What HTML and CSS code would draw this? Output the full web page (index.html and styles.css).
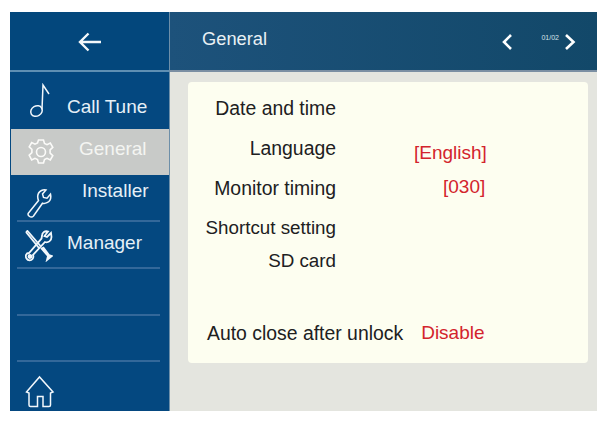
FILE: index.html
```html
<!DOCTYPE html>
<html lang="en">
<head>
    <meta charset="UTF-8">
    <title>General</title>
    <link rel="stylesheet" href="styles.css">
</head>
<body>
    <div class="screen">
        <div class="sidebar">
            <div class="back">
                <svg width="26" height="22" viewBox="0 0 26 22" fill="none" stroke="#f4f8fa" stroke-width="2.400"><path d="M24 12H3M11.500 3.500L3 12l8.500 8.500"/></svg>
            </div>
            <div class="menu-item tune">
                <svg width="26" height="38" viewBox="0 0 26 38" fill="none" stroke="#f2f7fb" stroke-width="1.500"><ellipse cx="7.500" cy="28" rx="6" ry="5" transform="rotate(-30 7.500 28)"/><path d="M13 26.500L14 2l6 9"/></svg>
                <span>Call Tune</span>
            </div>
            <div class="menu-item active">
                <svg width="26" height="28" viewBox="0 0 26 28" fill="none" stroke="#fbfbf9" stroke-width="1.600"><circle cx="13" cy="14" r="4.500"/><path d="M10.500 2h5l1 3.500 2.500 1.200 3.300-1.700 2.500 4.300-2.700 2.500v3.400l2.700 2.500-2.500 4.300-3.300-1.700-2.500 1.200-1 3.500h-5l-1-3.500-2.500-1.200-3.300 1.700L1.200 17.200l2.700-2.500v-3.400L1.200 8.800 3.700 4.500 7 6.200l2.500-1.200z"/></svg>
                <span>General</span>
            </div>
            <div class="menu-item installer">
                <svg width="26" height="30" viewBox="0 0 26 30" fill="none" stroke="#f2f7fb" stroke-width="1.500"><path d="M1.500 25l10-12.500c-1.500-4 -.5-8 3-10 1.500-.8 3-1 4.500-.6l-3.500 4 1 3.500 3.500.8 3.500-4c.8 3.500-.5 7-3.500 8.500-1.500.8-3 .9-4.500.5L6.500 28c-1.500 1.500-3.500 1-4.500 0s-1.500-1.800-.5-3z"/></svg>
                <span>Installer</span>
            </div>
            <div class="menu-item manager">
                <svg width="28" height="32" viewBox="0 0 28 32" fill="none" stroke="#f2f7fb" stroke-width="1.800"><path d="M1 2l1.500-1 13 15"/><path d="M1 2l13 16"/><path d="M16 18l7 8-1 4 5-4-3-1-6-8" fill="#f2f7fb"/><path d="M26 3l-4 4-2.500-1L23 1.500c-3-1-6 1-6 4.500l-.5 2.500L4 23c-3 0-4 3-2.500 5.500S6 31 7.500 29s1-3 .5-4l12-13c3 1 6.500-1 6.500-5z"/><circle cx="5" cy="26.500" r="1.500" fill="#f2f7fb"/></svg>
                <span>Manager</span>
            </div>
            <div class="menu-item empty thick"></div>
            <div class="menu-item empty"></div>
            <div class="home">
                <svg width="30" height="33" viewBox="0 0 30 33" fill="none" stroke="#f2f7fb" stroke-width="1.500"><path d="M1.500 17L14.500 2 28 17l-2.500 1v12c0 1-.5 1.500-1.500 1.500h-6V21.500h-5.500v10H5.500c-1 0-1.500-.5-1.500-1.500V18z"/></svg>
            </div>
        </div>
        <div class="main">
            <div class="header">
                <span class="title">General</span>
                <svg class="prev" width="12" height="18" viewBox="0 0 12 18" fill="none" stroke="#fff" stroke-width="2.600"><path d="M10 2L3 9l7 7"/></svg>
                <span class="page">01/02</span>
                <svg class="next" width="12" height="18" viewBox="0 0 12 18" fill="none" stroke="#fff" stroke-width="2.600"><path d="M2 2l7.500 7L2 16"/></svg>
            </div>
            <div class="content">
                <div class="panel">
                    <div class="row"><span class="label">Date and time</span></div>
                    <div class="row"><span class="label">Language</span><span class="value lang">[English]</span></div>
                    <div class="row"><span class="label">Monitor timing</span><span class="value timing">[030]</span></div>
                    <div class="row shortcut"><span class="label">Shortcut setting</span></div>
                    <div class="row short"><span class="label">SD card</span></div>
                    <div class="row auto"><span>Auto close after unlock</span><span class="value disable">Disable</span></div>
                </div>
            </div>
        </div>
    </div>
</body>
</html>
```

FILE: styles.css
```css
body {
    margin: 0;
    padding: 12px 0 0 10px;
    background-color: #fff;
    font-family: "Liberation Sans", Arial, sans-serif;
}
.screen {
    display: flex;
    width: 587px;
    height: 399px;
    background-color: #e3e3de;
}
.sidebar {
    width: 160px;
    flex-shrink: 0;
    display: flex;
    flex-direction: column;
    background-color: #044880;
    border-right: 1px solid #6d8fa9;
    box-sizing: border-box;
}
.back {
    height: 58px;
    flex-shrink: 0;
    display: flex;
    align-items: center;
    justify-content: center;
    border-bottom: 2px solid #5f8fb3;
    background-color: #03477c;
}
.menu-item {
    height: 46px;
    flex-shrink: 0;
    margin: 0 9px 0 7px;
    border-bottom: 2px solid #33689a;
    display: flex;
    color: #e6f0f7;
    font-size: 19px;
    box-sizing: border-box;
    position: relative;
}
.tune {
    height: 57px;
    margin: 0;
    border-bottom: none;
    padding: 11px 0 0 19px;
    gap: 12px;
}
.tune span {
    padding-top: 13px;
}
.active {
    height: 46px;
    margin: 0 0 0 1px;
    border-bottom: none;
    background-color: #c8cac8;
    color: #f4f5f2;
    padding: 9px 0 0 17px;
    gap: 25px;
}
.installer {
    height: 47px;
    padding: 13px 0 0 10px;
}
.installer span {
    margin: -8px 0 0 29px;
}
.manager {
    height: 47px;
    padding: 8px 0 0 8px;
    gap: 14px;
}
.manager span {
    padding-top: 2px;
}
.thick {
    height: 47px;
}
.home {
    flex: 1;
    display: flex;
    align-items: flex-end;
    padding: 0 0 3px 15px;
}
.main {
    flex: 1;
    display: flex;
    flex-direction: column;
}
.header {
    height: 60px;
    flex-shrink: 0;
    box-sizing: border-box;
    display: flex;
    align-items: center;
    background: linear-gradient(90deg, #1d527b, #124869);
    border-bottom: 2px solid #7b8fa3;
    color: #e9f0f4;
    padding: 0 21px 4px 32px;
}
.title {
    font-size: 18.300px;
    flex: 1;
    margin-top: -1px;
}
.page {
    font-size: 7px;
    margin: -3px 5px 0 28px;
    color: #d6e0e8;
}
.prev,
.next {
    margin-top: 6px;
}
.content {
    flex: 1;
    padding: 10px 9px 48px 18px;
    background-color: #e4e5df;
}
.panel {
    height: 100%;
    background-color: #fdfef0;
    border-radius: 4px;
    padding: 15px 0 0 0;
    box-sizing: border-box;
    color: #20201e;
    font-size: 19.4px;
}
.row {
    height: 40px;
    display: flex;
}
.shortcut {
    height: 33px;
    font-size: 18.800px;
}
.short {
    height: 26px;
    font-size: 18.800px;
}
.label {
    width: 148px;
    text-align: right;
    white-space: nowrap;
}
.value {
    color: #d3242c;
    font-size: 19px;
}
.lang {
    margin: 5px 0 0 78px;
}
.timing {
    margin: -1px 0 0 107px;
}
.auto {
    margin-top: 46px;
    padding-left: 19px;
}
.disable {
    margin-left: 18px;
}
```
